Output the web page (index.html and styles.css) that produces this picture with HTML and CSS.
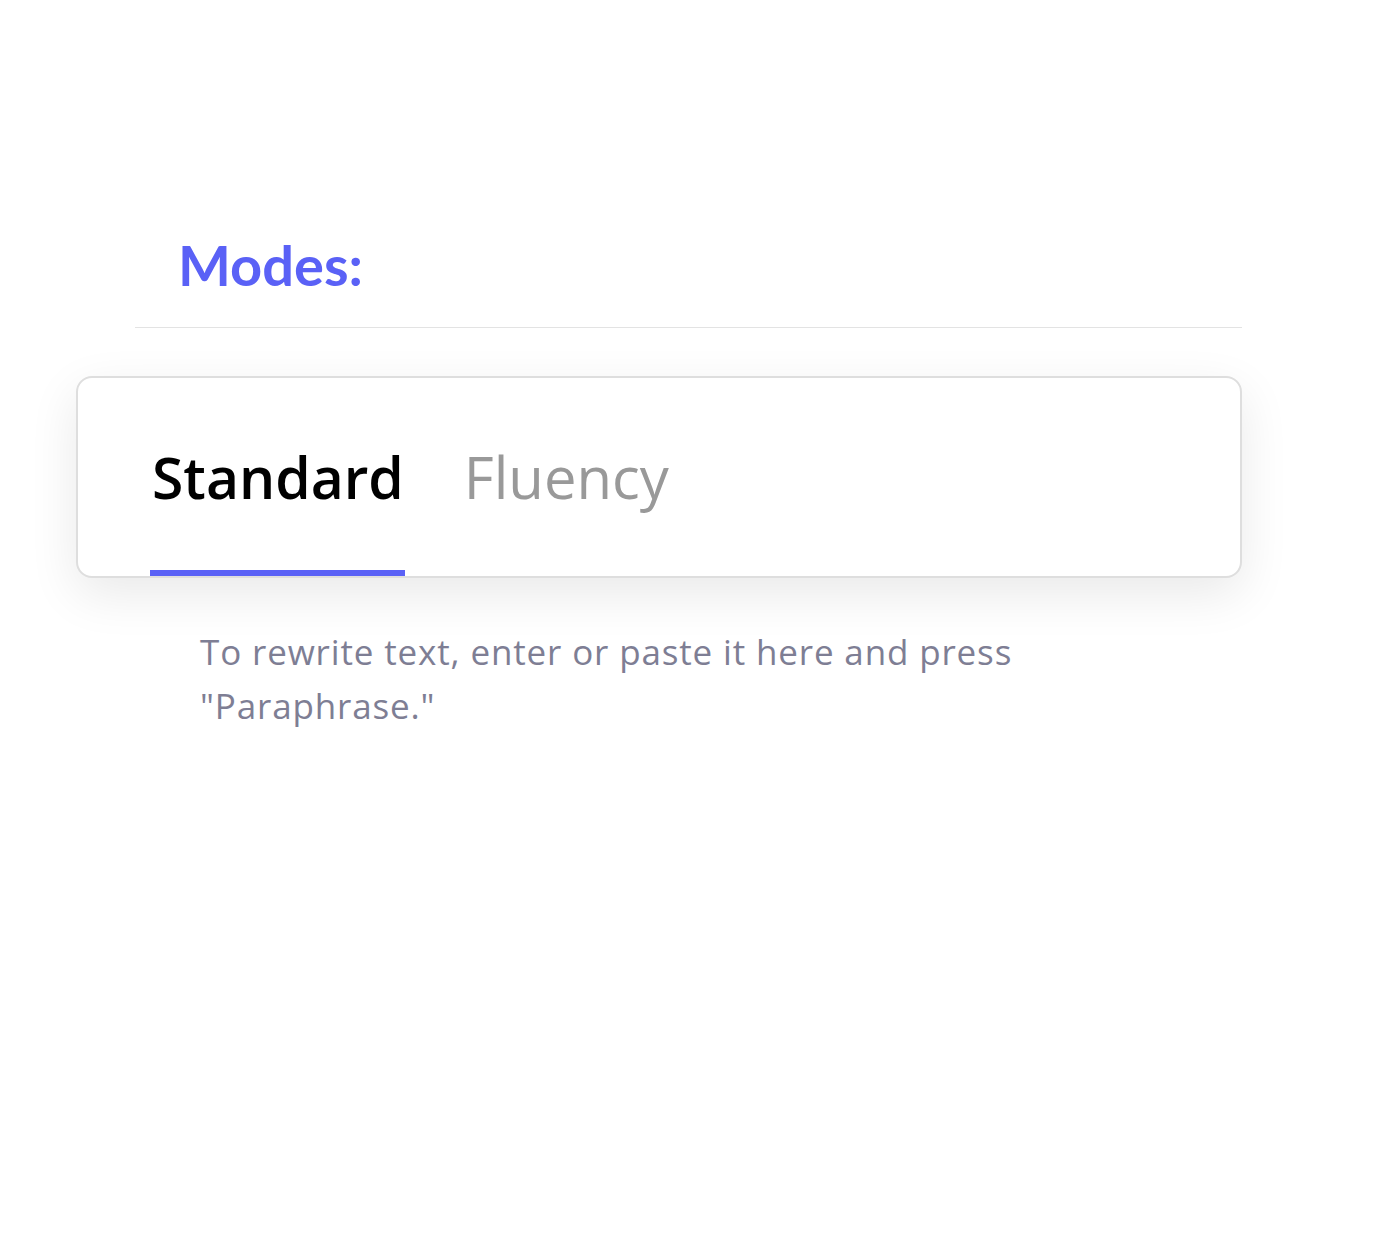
FILE: index.html
```html
<!DOCTYPE html>
<html lang="en">
<head>
    <meta charset="UTF-8">
    <title>Modes</title>
    <link rel="stylesheet" href="styles.css">
</head>
<body>
    <div class="page">
        <div class="modes-header">
            <h2>Modes:</h2>
        </div>

        <div class="mode-card">
            <div class="mode-tabs">
                <button class="mode-tab active">Standard</button>
                <button class="mode-tab">Fluency</button>
            </div>
        </div>

        <div class="editor">
            <p class="placeholder">To rewrite text, enter or paste it here and press<br>"Paraphrase."</p>
        </div>
    </div>
</body>
</html>
```

FILE: styles.css
```css
body {
    margin: 0;
    background: #fff;
    font-family: 'Open Sans', 'Noto Sans', sans-serif;
}

.page {
    width: 1166px;
    padding: 230px 0 0 76px;
}

.modes-header {
    margin-left: 59px;
    border-bottom: 1px solid #e3e3e3;
    padding: 0 0 27px 43px;
}

.modes-header h2 {
    margin: 0;
    font-family: Lato, 'Open Sans', sans-serif;
    font-weight: 700;
    font-size: 56px;
    line-height: 70px;
    color: #5a61f6;
}

.mode-card {
    margin-top: 48px;
    height: 202px;
    border: 2px solid #dedede;
    border-radius: 16px;
    background: #fff;
    box-shadow: 0 16px 50px rgba(0, 0, 0, 0.09);
    box-sizing: border-box;
    display: flex;
    align-items: flex-end;
}

.mode-tabs {
    display: flex;
    gap: 57px;
    padding-left: 72px;
}

.mode-tab {
    border: none;
    background: none;
    padding: 0 1px 53px 2px;
    margin: 0;
    font-family: 'Open Sans', 'Noto Sans', sans-serif;
    font-size: 58px;
    line-height: 80px;
    color: #999;
    border-bottom: 6px solid transparent;
    cursor: pointer;
}

.mode-tab.active {
    color: #000;
    font-size: 57px;
    font-weight: 600;
    border-bottom-color: #5a61f6;
}

.editor {
    padding: 47px 0 0 124px;
}

.placeholder {
    margin: 0;
    font-size: 35px;
    line-height: 54px;
    letter-spacing: 0.85px;
    color: #7e7e94;
}
```
